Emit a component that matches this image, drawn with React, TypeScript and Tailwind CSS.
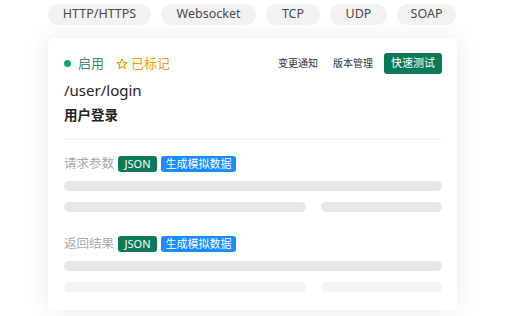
import React from 'react'

const protocols = [
    { name: 'HTTP/HTTPS', w: 'w-[103px]' },
    { name: 'Websocket', w: 'w-[95px]' },
    { name: 'TCP', w: 'w-[54px]' },
    { name: 'UDP', w: 'w-[57px]' },
    { name: 'SOAP', w: 'w-[59px]' },
]

const StarIcon = () => (
    <svg width="12" height="12" viewBox="0 0 24 24" fill="none" stroke="currentColor" strokeWidth="2.4" strokeLinejoin="round">
        <path d="M12 2.5l2.9 6.1 6.6.8-4.9 4.6 1.3 6.6L12 17.3l-5.9 3.3 1.3-6.6-4.9-4.6 6.6-.8z" />
    </svg>
)

const Section = ({ title, fade }: { title: string; fade?: boolean }) => (
    <div className='flex flex-col'>
        <div className='flex items-center h-[16px]'>
            <span className='text-[12.5px] text-[#a8a8a8] mr-[4px]'>{title}</span>
            <span className='h-[16px] w-[39px] rounded-[3px] bg-[#0b7a57] text-white text-[11px] flex items-center justify-center'>JSON</span>
            <span className='ml-[4px] h-[16px] w-[75px] rounded-[3px] bg-[#1a8cff] text-white text-[11px] flex items-center justify-center'>生成模拟数据</span>
        </div>
        <div className='mt-[9px] h-[10px] rounded-full bg-[#e6e7e9]' />
        <div className='mt-[11px] flex gap-[15px]'>
            <div className={`h-[10px] w-[242px] rounded-full ${fade ? 'bg-[#f2f3f4]' : 'bg-[#e6e7e9]'}`} />
            <div className={`h-[10px] flex-1 rounded-full ${fade ? 'bg-[#f2f3f4]' : 'bg-[#e6e7e9]'}`} />
        </div>
    </div>
)

const App = () => {
    return (
        <div className='w-[531px] h-[316px] overflow-hidden bg-white pl-[48px] pt-[4px] font-["Noto_Sans","Noto_Sans_CJK_SC",sans-serif]'>
            <div className='flex gap-[10px]'>
                {protocols.map((p) => (
                    <div key={p.name} className={`${p.w} h-[21px] rounded-full bg-[#f2f2f2] text-[12.5px] text-[#4a4a4a] flex items-center justify-center`}>
                        {p.name}
                    </div>
                ))}
            </div>
            <div className='mt-[13px] w-[409px] h-[272px] rounded-[6px] bg-white shadow-[0_0_24px_rgba(0,0,0,0.09)] px-[16px] pt-[15px] pr-[15px]'>
                <div className='flex items-center justify-between h-[21px]'>
                    <div className='flex items-center text-[13px]'>
                        <span className='w-[7px] h-[7px] rounded-full bg-[#12a86b] mr-[7px]' />
                        <span className='text-[#3d8a66]'>启用</span>
                        <span className='ml-[12px] text-[#f0960f] flex items-center gap-[3px]'>
                            <StarIcon />
                            已标记
                        </span>
                    </div>
                    <div className='flex items-center text-[10px] text-[#333]'>
                        <span>变更通知</span>
                        <span className='ml-[15px]'>版本管理</span>
                        <span className='ml-[11px] w-[58px] h-[21px] rounded-[3px] bg-[#087a58] text-white text-[11px] flex items-center justify-center'>快速测试</span>
                    </div>
                </div>
                <div className='mt-[5px] text-[15px] text-[#222] leading-[22px]'>/user/login</div>
                <div className='mt-[5px] text-[13.5px] font-bold text-[#222] leading-[18px]'>用户登录</div>
                <div className='mt-[15px] h-px bg-[#f0f0f0]' />
                <div className='mt-[16px]'>
                    <Section title='请求参数' />
                </div>
                <div className='mt-[24px]'>
                    <Section title='返回结果' fade />
                </div>
            </div>
        </div>
    )
}

export default App
